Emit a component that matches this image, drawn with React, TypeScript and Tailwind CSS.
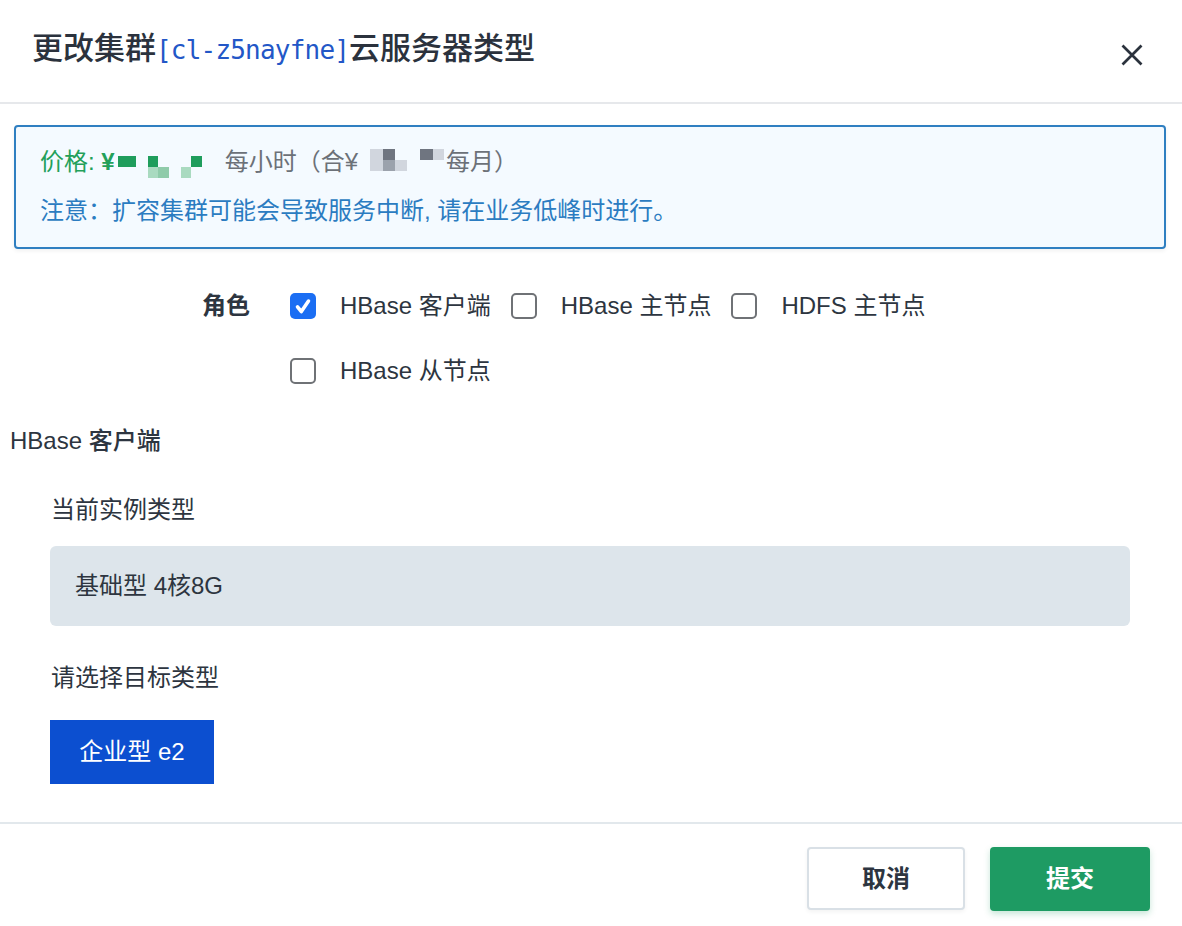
const sans = "font-['Liberation_Sans','Noto_Sans_CJK_SC',sans-serif]";

type Cell = string | null;

// 打码的价格像素块
function Mosaic({ rows, cols, className }: { rows: Cell[][]; cols: number[]; className?: string }) {
  return (
    <div className={`flex flex-col shrink-0 ${className ?? ""}`}>
      {rows.map((row, r) => (
        <div key={r} className="flex">
          {row.map((c, i) => (
            <span
              key={i}
              className="block shrink-0 h-[11px]"
              style={{ width: cols[i], backgroundColor: c ?? "transparent" }}
            />
          ))}
        </div>
      ))}
    </div>
  );
}

function Checkbox({ checked, label }: { checked?: boolean; label: string }) {
  return (
    <label className="flex items-center h-[32px] gap-[24px] cursor-pointer">
      <span
        className={`w-[26px] h-[26px] rounded-[5px] flex items-center justify-center ${
          checked ? "bg-[#1b6ef3]" : "border-2 border-[#6f7276] bg-white"
        }`}
      >
        {checked && (
          <svg viewBox="0 0 16 16" className="w-[22px] h-[22px]" fill="none">
            <path
              d="M4 8.6l2.8 3.4 5.2-7.6"
              stroke="white"
              strokeWidth="2.6"
              strokeLinecap="round"
              strokeLinejoin="round"
            />
          </svg>
        )}
      </span>
      <span className="text-[24px] text-[#2d3540] whitespace-nowrap">{label}</span>
    </label>
  );
}

export default function App() {
  const G = "#1f9d5c";
  const GL = "#a9dac0";
  const GM = "#8fcbaa";
  const SL = "#d1d6de";
  const SD = "#6f7580";
  const SM = "#9ba2ac";

  return (
    <div className={`w-[1182px] h-[926px] bg-white flex flex-col ${sans}`}>
      {/* header */}
      <div className="h-[104px] shrink-0 border-b-2 border-[#e6e8eb] flex items-center justify-between pl-[32px] pr-[39px] pb-[6px]">
        <h1 className="text-[31px] font-medium text-[#2b323d] leading-none whitespace-nowrap">
          更改集群
          <span className="font-['DejaVu_Sans_Mono',monospace] font-normal text-[26px] tracking-[-0.8px] text-[#2357c7]">
            [cl-z5nayfne]
          </span>
          云服务器类型
        </h1>
        <button type="button" className="mt-[14px] text-[#2b323d]">
          <svg viewBox="0 0 22 22" className="w-[22px] h-[22px]" fill="none">
            <path d="M1.5 1.5l19 19M20.5 1.5l-19 19" stroke="currentColor" strokeWidth="2.7" />
          </svg>
        </button>
      </div>

      {/* notice */}
      <div className="mt-[21px] ml-[14px] mr-[16px] h-[124px] border-2 border-[#2f7fc1] rounded-[4px] bg-[#f4faff] pl-[24px] pt-[19px] shadow-[0_2px_4px_rgba(0,0,0,0.06)]">
        <div className="flex items-start h-[32px] leading-[32px] text-[24px] whitespace-nowrap">
          <span className="text-[#23a05a]">价格:&nbsp;</span>
          <span className="text-[#23a05a] font-bold">¥</span>
          <Mosaic
            className="mt-[10px] ml-[3px]"
            cols={[18, 12, 10, 11, 12, 10, 11]}
            rows={[
              [G, null, G, null, null, null, G],
              [null, null, GL, GM, null, GL, null],
            ]}
          />
          <span className="ml-[23px] text-[#6c7178]">每小时（合¥</span>
          <Mosaic
            className="mt-[3px] ml-[12px]"
            cols={[13, 12, 12, 13, 13, 11]}
            rows={[
              [SL, SD, null, null, SD, SL],
              [SL, SM, SL, null, null, null],
            ]}
          />
          <span className="ml-[2px] text-[#6c7178]">每月）</span>
        </div>
        <p className="mt-[17px] h-[32px] leading-[32px] text-[24px] text-[#2b7cc1] whitespace-nowrap">
          注意：扩容集群可能会导致服务中断, 请在业务低峰时进行。
        </p>
      </div>

      {/* roles */}
      <div className="mt-[41px] flex items-start gap-[40px]">
        <div className="w-[250px] h-[32px] leading-[32px] text-right text-[24px] font-bold text-[#2d3540]">
          角色
        </div>
        <div className="w-[680px] flex flex-wrap gap-x-[20px] gap-y-[33px]">
          <Checkbox checked label="HBase 客户端" />
          <Checkbox label="HBase 主节点" />
          <Checkbox label="HDFS 主节点" />
          <Checkbox label="HBase 从节点" />
        </div>
      </div>

      {/* section */}
      <h2 className="mt-[38px] pl-[10px] h-[32px] leading-[32px] text-[24px] font-medium text-[#2d3540]">
        HBase 客户端
      </h2>
      <div className="ml-[50px] mr-[52px] flex flex-col">
        <p className="mt-[37px] pl-[1px] h-[32px] leading-[32px] text-[24px] text-[#2d3540]">
          当前实例类型
        </p>
        <div className="mt-[20px] h-[80px] rounded-[6px] bg-[#dde5eb] flex items-center pl-[25px] text-[24px] text-[#2d3540]">
          基础型 4核8G
        </div>
        <p className="mt-[36px] pl-[1px] h-[32px] leading-[32px] text-[24px] text-[#2d3540]">
          请选择目标类型
        </p>
        <div className="mt-[26px]">
          <button
            type="button"
            className="w-[164px] h-[64px] bg-[#0c4fd0] text-white text-[24px] flex items-center justify-center"
          >
            企业型 e2
          </button>
        </div>
      </div>

      {/* footer */}
      <div className="mt-[38px] border-t-2 border-[#e2e8ec] flex justify-end gap-[25px] pt-[23px] pr-[32px]">
        <button
          type="button"
          className="w-[158px] h-[63px] border-2 border-[#d9e0e6] rounded-[4px] bg-white text-[24px] font-bold text-[#2d3540] shadow-[0_2px_4px_rgba(0,0,0,0.05)]"
        >
          取消
        </button>
        <button
          type="button"
          className="w-[160px] h-[64px] rounded-[4px] bg-[#1e9b63] text-[24px] font-bold text-white shadow-[0_3px_6px_rgba(30,155,99,0.25)]"
        >
          提交
        </button>
      </div>
    </div>
  );
}
